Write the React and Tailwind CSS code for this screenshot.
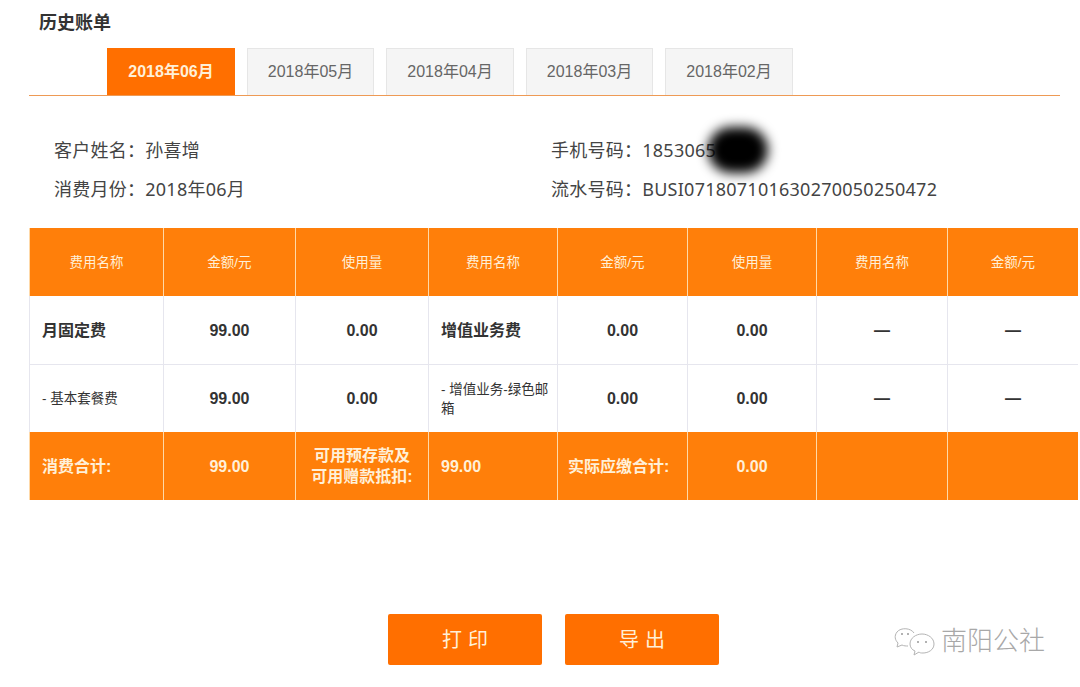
const font = { fontFamily: '"Liberation Sans", "Noto Sans CJK SC", sans-serif' };

const tabs = ["2018年06月", "2018年05月", "2018年04月", "2018年03月", "2018年02月"];
const tabWidths = ["w-[128px]", "w-[127px]", "w-[128px]", "w-[127px]", "w-[128px]"];

function Cell({ kind, align = "center", bold, small, rule, children }) {
  const bg = kind === "orange" ? "bg-[#ff7f0a]" : "bg-white";
  const line = kind === "orange" ? "border-[#ffd9a8]" : "border-[#e6e6ee]";
  const color = kind === "orange" ? "text-[#fff0d8]" : "text-[#333333]";
  return (
    <div
      className={`flex items-center px-3 border-l ${rule ? "border-t" : ""} ${bg} ${color} ${line} ${
        align === "center" ? "justify-center text-center" : "justify-start text-left"
      } ${bold ? "font-bold" : ""} ${small ? "text-[13.5px] leading-[19px]" : "text-base leading-[21px]"}`}
    >
      {children}
    </div>
  );
}

function WeChatMark() {
  return (
    <svg width="44" height="30" viewBox="0 0 44 30" fill="none" stroke="#b4b4b4" strokeWidth="1">
      <path d="M21 6C18 1 8 0 4 5c-3 4-2 8 1 11l-1 4 5-2c2 1 4 1 6 1" />
      <path d="M17 17c0-6 6-10 12-10s12 4 12 10-6 9-11 9c-2 0-3 0-4-1l-5 3 1-4c-3-1-5-4-5-7z" />
      <circle cx="9" cy="7" r="1" fill="#999" stroke="none" />
      <circle cx="15" cy="7" r="1" fill="#999" stroke="none" />
      <circle cx="25" cy="15" r="1" fill="#999" stroke="none" />
      <circle cx="33" cy="15" r="1" fill="#999" stroke="none" />
    </svg>
  );
}

export default function App() {
  return (
    <div className="relative w-[1080px] h-[687px] overflow-hidden bg-white" style={font}>
      {/* Title */}
      <h1 className="pl-[39px] pt-[13px] h-[48px] text-lg leading-[20px] font-bold text-[#333333]">历史账单</h1>

      {/* Month tabs */}
      <div className="ml-[29px] h-[47px] pl-[78px] flex gap-3">
        {tabs.map((t, i) => (
          <div
            key={t}
            className={`${tabWidths[i]} flex items-center justify-center text-base ${
              i === 0
                ? "bg-[#ff6f00] text-[#fff0d8] font-bold"
                : "bg-[#f5f5f5] text-[#666666] border border-b-0 border-[#e6e6e6]"
            }`}
          >
            {t}
          </div>
        ))}
      </div>
      <div className="ml-[29px] w-[1031px] h-px bg-[#ee9a55]" />

      {/* Customer info */}
      <div
        className="mt-[34px] h-[78px] pl-[54px] grid grid-cols-[497px_1fr] auto-rows-[39px] items-center text-lg tracking-[0.25px] text-[#444444]"
        style={{ fontFamily: '"Noto Sans", "Noto Sans CJK SC", sans-serif' }}
      >
        <div>客户姓名：孙喜增</div>
        <div className="relative">
          手机号码：1853065
          {/* smudge over the last digits */}
          <div className="absolute left-[157px] top-[-9px] w-[60px] h-[46px] rounded-full bg-black blur-[6px]" />
        </div>
        <div>消费月份：2018年06月</div>
        <div>流水号码：BUSI071807101630270050250472</div>
      </div>

      {/* Bill table */}
      <div className="mt-[20px] ml-[29px] w-[1049px] h-[272px] grid grid-cols-[134px_132px_133px_129px_130px_129px_131px_131px] grid-rows-[68px_68px_68px_68px]">
        <Cell kind="orange" small>费用名称</Cell>
        <Cell kind="orange" small>金额/元</Cell>
        <Cell kind="orange" small>使用量</Cell>
        <Cell kind="orange" small>费用名称</Cell>
        <Cell kind="orange" small>金额/元</Cell>
        <Cell kind="orange" small>使用量</Cell>
        <Cell kind="orange" small>费用名称</Cell>
        <Cell kind="orange" small>金额/元</Cell>

        <Cell align="left" bold>月固定费</Cell>
        <Cell bold>99.00</Cell>
        <Cell bold>0.00</Cell>
        <Cell align="left" bold>增值业务费</Cell>
        <Cell bold>0.00</Cell>
        <Cell bold>0.00</Cell>
        <Cell bold>—</Cell>
        <Cell bold>—</Cell>

        <Cell align="left" small rule>- 基本套餐费</Cell>
        <Cell bold rule>99.00</Cell>
        <Cell bold rule>0.00</Cell>
        <Cell align="left" small rule><span className="whitespace-nowrap">- 增值业务-绿色邮<br />箱</span></Cell>
        <Cell bold rule>0.00</Cell>
        <Cell bold rule>0.00</Cell>
        <Cell bold rule>—</Cell>
        <Cell bold rule>—</Cell>

        <Cell kind="orange" align="left" bold>消费合计:</Cell>
        <Cell kind="orange" bold>99.00</Cell>
        <Cell kind="orange" bold>可用预存款及<br />可用赠款抵扣:</Cell>
        <Cell kind="orange" align="left" bold>99.00</Cell>
        <Cell kind="orange" align="left" bold><span className="-ml-[2px] whitespace-nowrap">实际应缴合计:</span></Cell>
        <Cell kind="orange" bold>0.00</Cell>
        <Cell kind="orange" />
        <Cell kind="orange" />
      </div>

      {/* Buttons */}
      <div className="mt-[114px] ml-[388px] flex gap-[23px]">
        <button className="w-[154px] h-[51px] pl-[6px] rounded-[2px] bg-[#ff6f00] text-[#fff0d8] text-xl tracking-[6px]">打印</button>
        <button className="w-[154px] h-[51px] pl-[6px] rounded-[2px] bg-[#ff6f00] text-[#fff0d8] text-xl tracking-[6px]">导出</button>
      </div>

      {/* Watermark */}
      <div className="absolute left-[893px] top-[622px] flex items-center gap-[4px] text-[26px] font-light text-[#a8a8a8]">
        <WeChatMark />
        <span>南阳公社</span>
      </div>
    </div>
  );
}
